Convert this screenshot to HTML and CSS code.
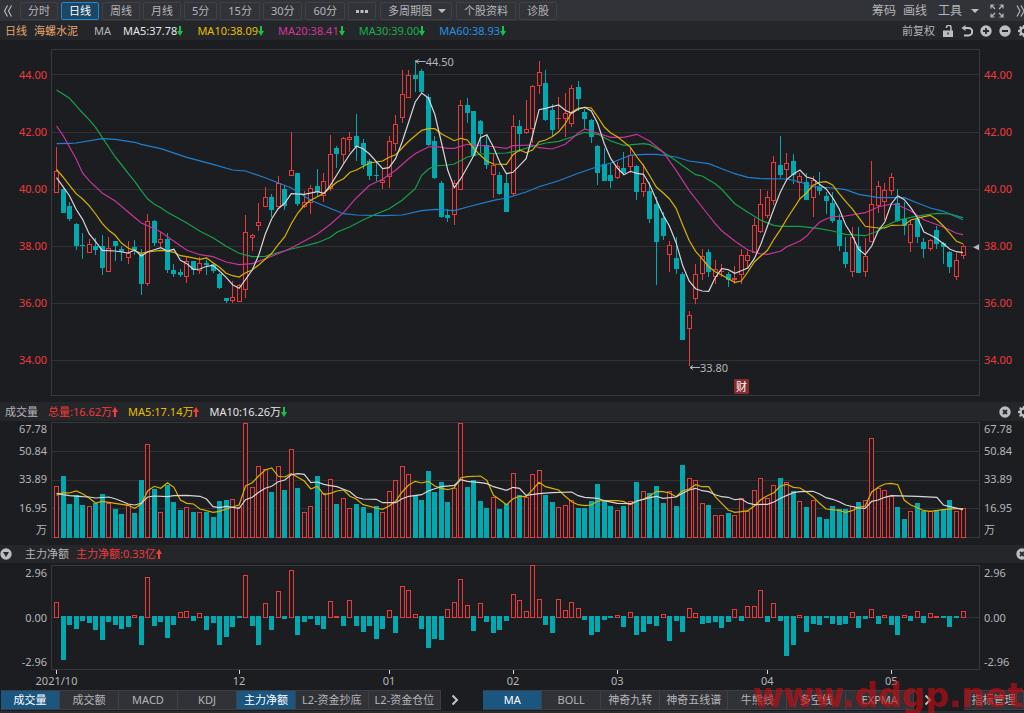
FILE: index.html
```html
<!DOCTYPE html>
<html lang="zh-CN">
<head>
<meta charset="utf-8">
<meta name="viewport" content="width=device-width, initial-scale=1">
<title>海螺水泥 日线</title>
<link rel="stylesheet" href="styles.css">
</head>
<body>
<svg class="defs" aria-hidden="true">
  <symbol id="down" viewBox="0 0 6 10"><path d="M2 0h2v5h2L3 10 0 5h2z"/></symbol>
  <symbol id="up" viewBox="0 0 6 10"><path d="M2 10h2V5h2L3 0 0 5h2z"/></symbol>
  <symbol id="gear" viewBox="0 0 12 12"><path fill-rule="evenodd" d="M5 0h2l.4 1.7 1 .4L9.900 1.100 11 2.300l-1 1.400.4 1L12 5v2l-1.600.4-.4 1 .9 1.400-1.400 1.300-1.300-.9-1 .4L7 12H5l-.4-1.500-1-.4-1.400.9L1 9.700l1-1.400-.4-1L0 7V5l1.600-.4.4-1L1.100 2.200 2.300 1l1.400.9 1-.4zM6 3.700a2.300 2.300 0 1 0 0 4.600 2.300 2.300 0 0 0 0-4.600z"/></symbol>
  <symbol id="close" viewBox="0 0 12 12"><circle cx="6" cy="6" r="5.700"/><path d="M4 4l4 4M8 4l-4 4" stroke="#25272b" stroke-width="1.800"/></symbol>
</svg>

<header class="toolbar">
  <button class="icon-btn back" aria-label="后退"><svg class="i12" viewBox="0 0 12 12"><path class="line" d="M5.500 0.500L2.500 6l3 5.500M9.500 0.500L6.500 6l3 5.500"/></svg></button>
  <nav class="periods" aria-label="周期">
    <button>分时</button>
    <button class="on">日线</button>
    <button>周线</button>
    <button>月线</button>
    <button>5分</button>
    <button>15分</button>
    <button>30分</button>
    <button>60分</button>
    <button aria-label="更多周期"><svg class="i12" viewBox="0 0 12 12"><path d="M0 5h3v3H0zM4.500 5h3v3h-3zM9 5h3v3H9z"/></svg></button>
    <span class="pick"><select aria-label="多周期图"><option>多周期图</option></select><i class="caret"></i></span>
    <button>个股资料</button>
    <button>诊股</button>
  </nav>
  <div class="tools">
    <button>筹码</button>
    <button>画线</button>
    <button class="menu">工具<i class="caret"></i></button>
    <button aria-label="全屏"><svg class="i14" viewBox="0 0 14 14"><path class="line" d="M1 4.500V1h3.500M1 1l4 4M9.500 1H13v3.500M13 1L9 5M1 9.500V13h3.500M1 13l4-4M13 9.500V13H9.500M13 13L9 9"/></svg></button>
    <button aria-label="展开"><svg class="i12" viewBox="0 0 12 12"><path class="line" d="M2 0.500L5 6l-3 5.500M6 0.500L9 6l-3 5.500"/></svg></button>
  </div>
</header>

<section class="bar info">
  <span class="orange">日线</span>
  <h1 class="orange">海螺水泥</h1>
  <span class="label">MA</span>
  <span class="white">MA5:37.78<svg class="arr g"><use href="#down"/></svg></span>
  <span class="yellow">MA10:38.09<svg class="arr g"><use href="#down"/></svg></span>
  <span class="pink">MA20:38.41<svg class="arr g"><use href="#down"/></svg></span>
  <span class="green">MA30:39.00<svg class="arr g"><use href="#down"/></svg></span>
  <span class="blue">MA60:38.93<svg class="arr g"><use href="#down"/></svg></span>
  <div class="actions">
    <button>前复权</button>
    <button aria-label="锁定"><svg class="i12" viewBox="0 0 12 12"><path fill-rule="evenodd" d="M1 5.500h10V12H1zM5.300 7.500v2h1.400v-2z"/><path d="M4.500 3V2.500a2.200 2.200 0 0 1 4.500 0v3.500" fill="none" stroke="#bcbdc0" stroke-width="1.500"/></svg></button>
    <button aria-label="撤销"><svg class="i12" viewBox="0 0 12 12"><path class="thick" d="M2 3h5.500a3.700 3.700 0 0 1 0 7.500H3"/><path d="M4.500 0v6L0.500 3z"/></svg></button>
    <button aria-label="放大"><svg class="i12" viewBox="0 0 12 12"><circle cx="6" cy="6" r="5.700"/><path d="M6 3v6M3 6h6" stroke="#25272b" stroke-width="1.800"/></svg></button>
    <button aria-label="缩小"><svg class="i12" viewBox="0 0 12 12"><circle cx="6" cy="6" r="5.700"/><path d="M3 6h6" stroke="#25272b" stroke-width="2"/></svg></button>
    <button aria-label="设置"><svg class="i12"><use href="#gear"/></svg></button>
  </div>
</section>

<main>
  <section class="pane price">
    <div class="axis left"><span>44.00</span><span>42.00</span><span>40.00</span><span>38.00</span><span>36.00</span><span>34.00</span></div>
    <div class="plot"><svg id="price" role="img" aria-label="日K线图"></svg></div>
    <div class="axis"><span>44.00</span><span>42.00</span><span>40.00</span><span>38.00</span><span>36.00</span><span>34.00</span></div>
  </section>

  <section class="bar vol-head">
    <h2>成交量</h2>
    <span class="red">总量:16.62万<svg class="arr r"><use href="#up"/></svg></span>
    <span class="yellow">MA5:17.14万<svg class="arr r"><use href="#up"/></svg></span>
    <span class="white">MA10:16.26万<svg class="arr g"><use href="#down"/></svg></span>
    <div class="actions">
      <button aria-label="关闭成交量"><svg class="i12"><use href="#close"/></svg></button>
      <button aria-label="设置成交量"><svg class="i12"><use href="#gear"/></svg></button>
    </div>
  </section>
  <section class="pane volume">
    <div class="axis left"><span>67.78</span><span>50.84</span><span>33.89</span><span>16.95</span><span>万</span></div>
    <div class="plot"><svg id="volume" role="img" aria-label="成交量图"></svg></div>
    <div class="axis"><span>67.78</span><span>50.84</span><span>33.89</span><span>16.95</span><span>万</span></div>
  </section>

  <section class="bar net-head">
    <button aria-label="选择指标"><svg class="i12" viewBox="0 0 12 12"><circle cx="6" cy="6" r="5.700"/><path d="M3 4h6L6 9z" fill="#25272b"/></svg></button>
    <h2>主力净额</h2>
    <span class="red">主力净额:0.33亿<svg class="arr r"><use href="#up"/></svg></span>
    <div class="actions"><button aria-label="关闭主力净额"><svg class="i12"><use href="#close"/></svg></button></div>
  </section>
  <section class="pane net">
    <div class="axis left"><span>2.96</span><span>0.00</span><span>-2.96</span></div>
    <div class="plot"><svg id="net" role="img" aria-label="主力净额图"></svg></div>
    <div class="axis"><span>2.96</span><span>0.00</span><span>-2.96</span></div>
  </section>
  <div class="dates"><svg id="dates" role="img" aria-label="日期"></svg></div>
</main>

<footer class="tabs">
  <nav class="group" aria-label="副图指标">
    <button class="on">成交量</button><button>成交额</button><button>MACD</button><button>KDJ</button><button class="on">主力净额</button><button>L2-资金抄底</button><button>L2-资金仓位</button>
  </nav>
  <button class="next" aria-label="更多副图指标"><svg class="i12" viewBox="0 0 12 12"><path class="thick" d="M3.500 1.500L8 6l-4.500 4.500"/></svg></button>
  <nav class="group second" aria-label="主图指标">
    <button class="on">MA</button><button>BOLL</button><button>神奇九转</button><button>神奇五线谱</button><button>牛熊线</button><button>多空线</button><button class="wide">EXPMA</button>
  </nav>
  <button class="next" aria-label="更多主图指标"><svg class="i12" viewBox="0 0 12 12"><path class="thick" d="M3.500 1.500L8 6l-4.500 4.500"/></svg></button>
  <div class="group manage"><button>指标管理</button></div>
  <div class="watermark">www.ddgp.net</div>
</footer>
<script src="chart.js"></script>
</body>
</html>
```

FILE: styles.css
```css
* { box-sizing: border-box; }

body {
  margin: 0;
  min-height: 100vh;
  display: flex;
  flex-direction: column;
  overflow: hidden auto;
  background: #1c1d21;
  color: #b4b5b8;
  font: 11px/16px "Noto Sans", "Noto Sans CJK SC", sans-serif;
}

h1, h2 { margin: 0; font: inherit; }

button, select {
  margin: 0;
  padding: 0;
  border: 0;
  background: none;
  color: inherit;
  font: inherit;
  white-space: nowrap;
  flex: none;
}

svg { display: block; fill: #bcbdc0; flex: none; }
.defs { position: absolute; width: 0; height: 0; }
.i12 { width: 12px; height: 12px; }
.i14 { width: 14px; height: 14px; }
.line { fill: none; stroke: #b4b5b8; stroke-width: 1.2; }
.thick { fill: none; stroke: #c4c5c8; stroke-width: 2; }

.caret {
  border: 4px solid transparent;
  border-top-color: #bcbdc0;
  border-bottom: 0;
}

.toolbar {
  display: flex;
  align-items: center;
  height: 21px;
  padding-left: 2px;
  background: #323338;
  overflow: hidden;
}
.back { width: 18px; }
.periods { display: flex; gap: 3px; }
.periods > button, .pick {
  display: flex;
  align-items: center;
  height: 18px;
  padding: 0 7px;
  border: 1px solid #404146;
  border-radius: 2px;
}
.periods > .on { background: #1b4766; border-color: #2389cf; color: #fff; }
.pick { gap: 6px; padding-right: 5px; margin-left: 1px; }
.pick select { appearance: none; }
.pick + button { margin-left: 1px; }

.tools {
  display: flex;
  align-items: center;
  gap: 11px;
  margin-left: auto;
  margin-right: -3px;
  font-size: 12px;
}
.tools button:first-child { margin-right: -4px; }
.menu { display: flex; align-items: center; gap: 9px; }

.bar {
  display: flex;
  align-items: center;
  height: 20px;
  padding-left: 5px;
  background: #25262a;
  overflow: hidden;
}
.bar > span { display: flex; align-items: center; white-space: nowrap; }
.info { gap: 14px; border-bottom: 1px solid #1c1d21; }
.info > span:first-child { margin-right: -7px; }
.info .label { margin: 0 -2px 0 2px; }
.vol-head { gap: 10px; height: 19px; }
.net-head { gap: 7px; height: 18px; padding-left: 0; }
.net-head h2 { margin-left: 6px; }
.arr { width: 6px; height: 10px; }
.g { fill: #12c24c; }
.r { fill: #f43b3b; }
.actions { display: flex; align-items: center; gap: 7px; margin-left: auto; margin-right: -6px; }
.net-head .actions { margin-right: -4px; }

.orange { color: #e3a56b; }
.white { color: #e4e4e6; }
.yellow { color: #e6bf00; }
.pink { color: #d4349c; }
.green { color: #17b04e; }
.blue { color: #2490e2; }
.red { color: #ee3a3a; }

main { flex: 1; display: flex; flex-direction: column; }
.pane {
  display: grid;
  grid-template-columns: 51px minmax(0, 1fr) 44px;
  grid-template-rows: minmax(0, 1fr);
}
.axis { display: grid; align-items: center; padding-left: 4px; }
.axis.left { padding: 0 4px 0 0; text-align: right; }
.plot { display: grid; grid-template-rows: minmax(0, 1fr); }
.plot svg { width: 100%; height: 100%; min-height: 0; }

.price { flex: 1; min-height: 300px; padding-bottom: 6px; }
.price .axis { margin: 5px 0 7px; grid-auto-rows: 1fr; color: #ee3a3a; }
.price .plot { margin-top: 8px; }
.volume { height: 124px; padding-bottom: 7px; }
.volume .axis { grid-template-rows: 16fr 29fr 29fr 29fr 14fr; }
.volume .plot { margin-top: 1px; }
.net { height: 107px; }
.net .axis { align-content: space-between; margin: 2px 0 0; }
.net .plot { margin-top: 2px; }
.dates { height: 20px; padding: 0 44px 0 51px; }
.dates svg { width: 100%; height: 20px; overflow: visible; }
svg text { font-size: 11px; fill: #b4b5b8; }
svg text.badge { fill: #fff; }

.tabs {
  position: relative;
  display: flex;
  align-items: center;
  height: 23px;
  padding: 0 0 2px 1px;
  border-bottom: 2px solid #2b2c30;
}
.group { display: flex; border: 1px solid #3d3e43; border-left: 0; }
.group button {
  min-width: 59px;
  height: 18px;
  padding: 0 6px;
  background: #313237;
  border-right: 1px solid #404146;
}
.group button:last-child { border-right: 0; }
.group .wide { min-width: 67px; }
.group .on { background: #1a5680; color: #fff; }
.next { width: 28px; display: flex; justify-content: center; }
.second { margin-left: 14px; }
.manage { margin-left: auto; }
.watermark {
  position: absolute;
  right: 1px;
  bottom: -4px;
  font: bold 33px/38px "DejaVu Sans", sans-serif;
  color: rgba(200, 10, 16, 0.65);
  pointer-events: none;
}
@media (max-width: 1000px) { .tabs { overflow: hidden; } }
```

FILE: chart.js
```js
// Each candle: direction (r = up, t = down), high, body top, body bottom, low.
const candles = `r 315 388 452 452,t 437 440 513 513,t 480 491 532 536,t 543 546 611 624,t 573 608 611 651,r 591 606 632 632,t 588 611 625 639,t 579 611 678 698,r 585 618 691 691,t 597 597 612 656,t 613 622 630 657,r 597 632 647 666,t 594 614 624 639,t 621 635 725 759,r 516 538 725 731,t 534 538 603 611,r 570 592 602 615,t 573 591 684 692,t 666 684 696 705,t 681 689 700 705,r 645 657 704 722,t 657 657 683 698,r 645 664 686 695,t 654 663 668 698,t 663 667 686 692,t 692 696 737 741,t 767 767 777 784,r 717 766 776 782,r 726 730 780 780,r 518 571 745 768,r 576 580 588 627,r 483 541 553 567,r 435 465 496 496,t 456 465 504 525,r 402 423 494 496,t 429 440 491 504,r 270 384 401 401,t 393 393 486 491,r 447 480 496 498,r 429 438 483 516,t 381 432 450 462,r 393 418 461 480,r 279 337 440 447,t 312 318 335 378,r 285 289 338 366,r 270 286 293 330,t 216 283 314 357,t 291 303 368 381,t 350 357 402 414,t 363 398 402 417,r 380 415 422 441,r 282 297 404 438,r 219 247 307 326,r 84 157 227 242,r 84 99 167 167,t 54 99 110 150,t 80 88 149 155,t 155 166 308 311,t 282 297 409 411,t 417 423 524 528,t 501 519 527 540,r 414 423 520 548,r 174 189 443 443,t 168 189 213 242,t 207 207 342 345,t 233 238 277 333,t 278 310 370 381,r 333 369 398 468,t 390 398 455 458,t 393 423 509 509,r 219 252 457 461,t 233 252 275 330,r 174 262 272 275,r 128 133 262 302,r 57 90 131 155,t 84 123 233 237,t 185 205 263 282,r 165 227 230 260,r 152 213 230 285,r 129 138 245 255,t 117 135 171 207,t 200 210 230 260,t 230 233 284 303,t 308 312 392 429,t 318 366 417 417,t 366 398 417 437,r 360 373 407 411,t 330 378 392 395,r 318 340 375 392,t 369 371 449 474,r 366 423 449 465,t 420 446 530 543,t 465 486 600 728,t 510 527 582 594,r 597 608 638 689,t 584 647 680 695,t 690 697 893 893,r 807 820 862 971,r 666 697 770 785,r 621 642 696 713,t 621 629 689 705,r 655 681 704 725,r 666 687 691 705,t 689 697 713 734,r 672 709 713 725,r 621 639 699 725,r 627 640 656 680,r 528 549 632 632,r 441 486 569 573,r 447 465 521 527,r 342 360 476 488,t 282 369 398 408,r 333 363 383 416,t 336 356 400 425,r 392 402 423 471,t 392 420 473 473,r 402 415 467 525,t 390 434 448 459,t 450 462 476 516,t 450 483 538 543,t 516 534 612 627,t 585 630 665 678,r 555 586 691 705,t 555 612 692 692,r 588 642 691 705,r 356 486 599 600,r 417 432 492 513,r 423 444 479 534,r 392 405 446 459,t 440 483 536 540,t 479 530 552 578,r 534 546 602 630,t 522 530 585 602,t 588 600 622 647,r 590 595 620 627,t 552 563 605 621,t 600 603 615 666,t 627 629 675 692,r 633 653 705 713,r 605 613 641 650`
  .split(",").map(s => { const p = s.split(" "); return [p[0], ...p.slice(1).map(Number)]; });

const volumes = [259,227,311,286,316,318,309,283,308,327,342,311,339,240,133,267,337,255,306,330,320,336,337,336,350,303,300,298,320,69,262,199,206,277,199,269,148,264,337,318,227,278,236,311,295,323,313,322,339,317,337,272,241,197,223,284,300,213,275,247,306,265,69,261,239,303,325,292,327,313,220,286,292,223,211,286,306,321,315,301,324,324,303,252,300,319,331,319,303,247,272,280,258,309,273,319,196,233,241,309,314,346,346,339,346,294,333,270,233,295,256,233,246,272,304,321,301,350,356,319,328,327,317,306,301,115,264,270,287,322,356,334,309,332,334,329,327,300,334,325];

const flows = [172,344,240,251,227,234,254,285,231,240,251,245,211,301,97,243,231,279,240,201,198,227,204,254,234,301,276,245,218,91,243,301,175,254,139,223,76,270,231,223,240,251,167,214,243,164,243,260,243,282,251,195,263,122,136,206,251,310,282,285,192,172,102,181,257,175,231,263,254,228,147,165,198,61,162,240,263,162,195,172,189,225,270,260,225,220,209,245,201,270,260,237,243,206,288,228,260,189,204,237,234,231,249,231,192,228,184,184,136,231,175,228,332,299,211,260,237,240,220,237,240,237,201,249,223,192,237,209,240,270,211,228,198,234,204,214,220,245,219,198];

// Averages are "index,level" pairs.
const priceLines = {
  "#2080d0": "0,305 2,304 3,303 7,290 9,292 12,301 13,307 16,320 20,346 24,367 27,384 29,387 32,407 36,438 39,475 41,491 44,515 46,519 50,521 53,519 56,506 58,502 61,506 63,495 67,475 69,468 72,450 74,434 77,416 80,394 82,380 85,363 88,340 90,337 92,337 95,345 97,357 100,365 102,380 104,395 106,406 108,410 112,411 114,420 116,434 119,438 121,443 123,457 126,467 130,467 132,483 134,498 136,508 139,533",
  "#17a04a": "0,144 1,156 2,169 3,191 4,213 5,233 6,256 7,286 8,315 9,345 10,369 11,394 12,418 13,446 14,471 15,487 16,497 17,511 20,543 22,568 24,587 26,613 28,634 30,644 32,643 34,632 36,621 38,612 40,602 42,586 43,571 45,554 47,534 49,516 51,500 53,475 55,440 56,400 57,382 58,372 60,369 61,366 63,345 65,336 69,333 71,325 73,313 75,303 77,298 79,285 81,271 83,277 85,297 87,310 90,305 91,308 93,330 95,356 97,385 98,398 99,402 101,425 102,442 104,485 106,511 108,535 110,550 111,553 114,553 117,560 119,567 121,577 124,581 126,567 127,553 129,535 131,526 133,519 135,514 137,516 139,527",
  "#c6359a": "0,252 1,280 2,315 3,350 4,393 5,416 7,453 9,477 11,510 13,543 14,551 16,570 18,598 20,625 22,638 24,644 26,660 28,668 30,665 32,650 34,635 36,618 38,597 40,576 42,547 44,512 46,467 48,430 50,412 52,385 54,350 55,335 57,315 58,313 60,319 61,319 63,307 66,312 69,319 70,311 73,309 74,317 76,321 78,307 79,290 80,273 81,261 83,274 85,286 87,286 89,277 91,298 93,330 95,385 97,445 99,495 101,545 102,566 104,597 106,624 108,636 109,637 111,628 112,614 114,597 115,583 116,560 117,541 118,531 119,524 121,522 124,512 126,495 128,486 129,489 131,507 133,533 134,541 136,555 138,574 139,578",
  "#d9b200": "0,382 1,405 2,430 3,455 4,471 5,491 6,516 7,544 8,565 9,580 10,604 11,618 12,626 13,634 14,630 16,625 17,627 18,631 19,641 20,644 22,652 23,648 24,662 25,676 26,694 27,701 28,705 29,692 30,684 31,669 33,634 34,608 35,584 36,545 37,513 38,490 39,475 41,454 43,420 44,410 45,391 46,384 48,363 50,357 51,346 52,338 54,298 56,265 57,260 58,260 59,275 61,296 62,289 63,294 64,320 65,340 66,357 67,366 69,367 70,338 71,324 72,332 73,324 74,299 75,294 76,284 77,269 78,246 79,211 80,199 81,196 82,198 83,225 84,255 85,273 86,284 87,300 88,316 89,345 90,371 91,403 92,436 93,452 94,471 95,499 96,548 97,595 98,628 99,650 100,674 101,689 102,699 103,710 104,721 105,717 106,690 107,660 108,642 109,625 110,592 111,563 112,530 114,470 115,453 116,430 117,421 118,419 119,429 120,455 121,478 122,500 123,527 124,553 126,558 127,558 128,550 130,549 131,534 133,524 134,520 135,533 136,552 137,575 138,598 139,605",
  "#d6d6d8": "0,407 1,434 2,461 3,502 4,532 5,575 6,599 7,625 9,627 11,633 12,624 13,642 14,629 15,623 16,617 17,627 18,622 19,655 20,665 21,682 22,681 23,673 24,670 25,687 26,706 27,728 28,739 29,712 30,684 31,640 32,577 33,530 34,500 35,483 36,455 38,457 40,449 41,454 42,430 44,366 45,336 46,313 47,320 48,336 50,380 51,377 52,350 53,300 54,240 55,180 56,153 57,167 58,217 59,300 60,385 61,437 62,410 63,375 64,340 65,287 66,278 67,316 68,362 69,395 70,391 72,350 73,280 74,203 75,199 77,189 78,205 79,214 80,202 81,196 82,207 83,245 84,305 85,350 86,378 87,398 88,388 89,394 90,397 91,430 92,475 93,518 94,553 95,602 96,670 97,717 98,740 99,747 100,748 101,707 102,680 103,683 104,694 105,686 106,678 107,650 108,607 109,553 110,500 111,450 112,412 113,396 114,384 115,405 116,410 117,427 118,441 119,467 120,500 121,548 122,580 123,622 124,638 125,612 126,566 127,540 128,485 129,461 130,473 131,497 132,527 133,570 134,579 135,590 136,605 137,622 138,629 139,632"
};

const volumeLines = {
  "#d9b200": "0,286 1,278 2,279 3,273 4,281 5,294 6,309 7,304 9,310 11,316 12,325 13,312 14,272 15,259 16,265 17,248 18,262 19,300 20,310 21,312 22,327 24,337 25,334 26,327 28,315 29,258 30,248 31,228 32,210 33,204 34,229 35,231 36,221 37,232 38,243 39,267 40,259 41,284 42,280 43,273 44,270 45,289 46,298 47,314 49,324 50,328 51,318 52,304 53,276 54,255 55,244 56,249 57,244 58,258 59,265 60,269 61,263 62,233 63,230 65,228 66,241 67,286 68,299 69,314 70,296 71,289 72,290 73,269 74,247 75,260 76,265 77,270 78,289 79,305 80,314 81,317 82,315 83,303 84,302 86,302 87,305 88,314 89,304 90,298 91,287 92,274 93,275 94,279 95,290 96,272 97,267 98,254 99,260 100,260 101,290 102,310 103,330 104,337 105,335 106,332 107,318 108,299 109,287 110,278 111,258 112,253 113,262 114,264 115,276 116,290 117,310 118,327 120,331 121,337 122,332 123,322 124,318 125,276 126,262 127,252 128,250 129,254 130,301 131,315 132,323 133,332 134,334 136,329 138,326 139,326",
  "#d6d6d8": "0,280 1,284 2,287 4,290 5,291 6,294 8,291 9,296 10,304 11,312 12,315 13,310 14,291 15,288 17,290 18,287 20,286 22,289 23,297 24,320 25,323 26,319 28,325 29,299 30,292 31,277 32,265 33,259 34,245 35,240 36,224 37,221 38,223 39,248 40,246 41,253 42,257 43,260 44,268 45,275 46,292 47,297 49,298 50,308 52,308 53,296 54,289 56,284 57,273 58,266 59,260 61,256 62,239 63,244 65,248 66,251 67,260 69,271 70,262 71,265 72,286 74,281 76,278 79,276 80,287 81,292 83,295 84,302 86,310 88,311 89,303 91,293 92,289 93,295 95,291 96,280 97,270 98,265 99,272 100,275 101,284 102,290 103,292 104,299 105,297 106,309 107,314 109,313 110,306 111,295 113,278 114,275 116,274 117,282 118,293 119,298 120,305 121,315 123,324 124,325 125,304 126,300 127,292 128,287 132,289 135,292 136,315 137,320 139,329"
};

const RED = "#e83a3a", TEAL = "#00a8b0", BG = "#1c1d21", GRID = "#303135";
const SPAN = 2787;

// Scales of one pane: level range [top, bottom] onto the svg's own size.
function pane(id, top, bottom) {
  const svg = document.getElementById(id);
  const { width: w, height: h } = svg.getBoundingClientRect();
  return {
    svg, w, h,
    x: i => (16.5 + 19.565 * i) * w / SPAN,
    gx: v => v * w / SPAN,
    y: v => (v - top) * h / (bottom - top)
  };
}
const rect = (x, y, w, h, fill) => `<rect x="${x}" y="${y}" width="${w}" height="${h}" fill="${fill}"/>`;
const hollow = (x, y, w, h) => `<rect x="${x + .5}" y="${y + .5}" width="${w - 1}" height="${h - 1}" fill="${BG}" stroke="${RED}"/>`;

function frame(p, levels) {
  return `<rect x=".5" y=".5" width="${p.w - 1}" height="${p.h - 1}" fill="none" stroke="#37383d"/>` +
    levels.map(v => rect(1, Math.floor(p.y(v)), p.w - 2, 1, GRID)).join("");
}
function bar(p, i, a, b, up) {
  const c = Math.floor(p.x(i)), t = Math.round(p.y(a)), h = Math.max(1, Math.round(p.y(b)) - t);
  return up && h > 2 ? hollow(c - 2, t, 5, h) : rect(c - 2, t, 5, h, up ? RED : TEAL);
}
function lines(p, set) {
  return Object.entries(set).map(([color, pts]) => {
    const d = pts.split(" ").map(s => {
      const [i, v] = s.split(",").map(Number);
      return p.x(i).toFixed(1) + "," + p.y(v).toFixed(1);
    }).join(" ");
    return `<polyline points="${d}" fill="none" stroke="${color}" stroke-width="1.2"/>`;
  }).join("");
}
function callout(p, gx, v, text) {
  const x = p.gx(gx), y = Math.round(p.y(v)) + .5;
  return `<path d="M${x + 10} ${y}H${x}M${x + 3} ${y - 2}L${x} ${y}l3 2" fill="none" stroke="#b4b5b8"/>` +
    `<text x="${x + 10}" y="${y + 4}">${text}</text>`;
}

function draw() {
  let p = pane("price", 21, 1062);
  let out = frame(p, [98, 271, 442, 612, 785, 956]);
  candles.forEach(([dir, hi, top, bot, lo], i) => {
    const y0 = Math.round(p.y(hi)), y1 = Math.round(p.y(lo));
    out += rect(Math.floor(p.x(i)), y0, 1, Math.max(1, y1 - y0), dir === "r" ? RED : TEAL);
    out += bar(p, i, top, bot, dir === "r");
  });
  out += lines(p, priceLines) + callout(p, 1094, 57, "44.50") + callout(p, 1917, 976, "33.80");
  const bx = Math.round(p.gx(2049)), by = Math.round(p.y(1011)), my = p.y(616);
  out += `<rect x="${bx}" y="${by}" width="15" height="15" rx="1" fill="#862a2c"/><text class="badge" x="${bx + 2}" y="${by + 12}">财</text>`;
  out += `<path d="M${p.w - 7} ${my}l6-3v6z" fill="#b4b5b8"/>`;
  p.svg.innerHTML = out;

  p = pane("volume", 66, 414);
  out = frame(p, [154, 240, 326]);
  volumes.forEach((v, i) => { out += bar(p, i, v, 414, candles[i][0] === "r"); });
  p.svg.innerHTML = out + lines(p, volumeLines);

  p = pane("net", 60, 375);
  out = frame(p, [216]);
  flows.forEach((v, i) => { out += v < 215 ? bar(p, i, v, 218, true) : bar(p, i, 213, v, false); });
  p.svg.innerHTML = out;

  p = pane("dates", 0, 60);
  p.svg.innerHTML = [[0, "2021/10"], [28, "12"], [51, "01"], [70, "02"], [86, "03"], [109, "04"], [128, "05"]]
    .map(([i, t]) => rect(Math.floor(p.x(i)), 0, 1, 4, "#d6d6d8") + `<text x="${p.x(i)}" y="15" text-anchor="middle">${t}</text>`).join("");
}
draw();
addEventListener("resize", draw);
```
